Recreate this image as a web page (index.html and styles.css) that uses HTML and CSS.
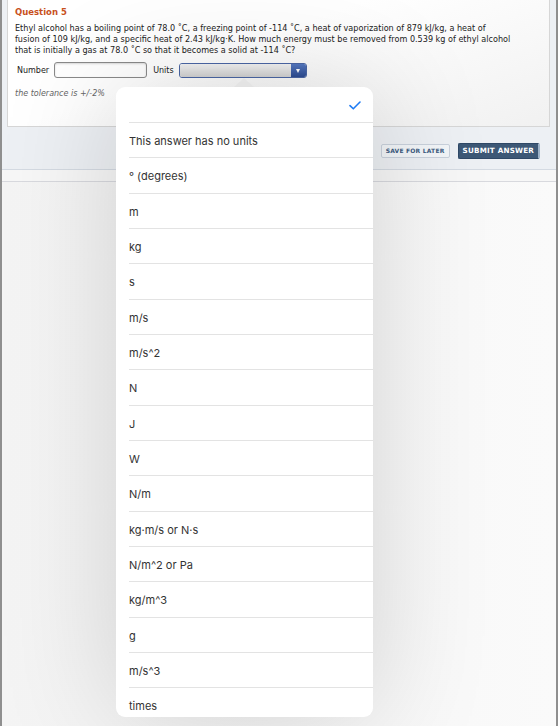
FILE: index.html
```html
<!DOCTYPE html>
<html lang="en">
<head>
    <meta charset="UTF-8">
    <meta name="viewport" content="width=device-width, initial-scale=1.0">
    <title>Question 5</title>
    <link rel="stylesheet" href="styles.css">
</head>
<body>

<div class="frame">
    <div class="panel">
        <div class="question">
            <h3 class="q-title">Question 5</h3>
            <p class="q-text">Ethyl alcohol has a boiling point of 78.0 &#730;C, a freezing point of -114 &#730;C, a heat of vaporization of 879 kJ/kg, a heat of<br>
            fusion of 109 kJ/kg, and a specific heat of 2.43 kJ/kg&middot;K. How much energy must be removed from 0.539 kg of ethyl alcohol<br>
            that is initially a gas at 78.0 &#730;C so that it becomes a solid at -114 &#730;C?</p>

            <div class="answer-row">
                <label for="number">Number</label>
                <input type="text" id="number" class="num-input">
                <label>Units</label>
                <div class="unit-select">
                    <span class="unit-value"></span>
                    <span class="unit-arrow"></span>
                </div>
            </div>

            <div class="tolerance">the tolerance is +/-2%</div>
        </div>

        <div class="actions">
            <button class="btn-save">SAVE FOR LATER</button>
            <button class="btn-submit">SUBMIT ANSWER</button>
        </div>
    </div>
    <div class="strip"></div>
    <div class="rest"></div>
</div>

<!-- units picker popover -->
<div class="popover">
    <div class="pop-arrow"></div>
    <div class="pop-card">
        <div class="pop-head">
            <svg width="12" height="9" viewBox="0 0 12 9"><path d="M1 4.6 L4.3 7.8 L11 1" fill="none" stroke="#1f7cf4" stroke-width="1.6" stroke-linecap="round" stroke-linejoin="round"/></svg>
        </div>
        <div class="opt">This answer has no units</div>
        <div class="opt">&deg; (degrees)</div>
        <div class="opt">m</div>
        <div class="opt">kg</div>
        <div class="opt">s</div>
        <div class="opt">m/s</div>
        <div class="opt">m/s^2</div>
        <div class="opt">N</div>
        <div class="opt">J</div>
        <div class="opt">W</div>
        <div class="opt">N/m</div>
        <div class="opt">kg&middot;m/s or N&middot;s</div>
        <div class="opt">N/m^2 or Pa</div>
        <div class="opt">kg/m^3</div>
        <div class="opt">g</div>
        <div class="opt">m/s^3</div>
        <div class="opt">times</div>
    </div>
</div>

</body>
</html>
```

FILE: styles.css
```css
body {
    margin: 0;
    font-family: 'DejaVu Sans', Verdana, sans-serif;
    background: #fff;
    height: 726px;
    overflow: hidden;
    position: relative;
}
.frame {
    width: 554px;
    height: 726px;
    border-left: 2px solid #8f8f8f;
    border-right: 2px solid #8f8f8f;
    display: flex;
    flex-direction: column;
}
.panel {
    background: #edf0f4;
    padding: 0 6px 0 5px;
    border-bottom: 1px solid #d4dae2;
}
.question {
    height: 127px;
    box-sizing: border-box;
    padding: 6px 7px 0;
    background: linear-gradient(160deg, #ffffff 40%, #f1f1f1);
    border: 1px solid #d6d6d6;
    border-top: none;
}
.q-title {
    margin: 0 0 5px;
    font-size: 8.5px;
    line-height: 12px;
    color: #c8501c;
    font-weight: bold;
}
.q-text {
    margin: 0;
    font-size: 8.1px;
    line-height: 11px;
    color: #222;
    white-space: nowrap;
}
.answer-row {
    display: flex;
    align-items: center;
    margin-top: 6px;
    height: 16px;
    font-size: 8px;
    color: #222;
}
.answer-row label {
    margin-left: 2px;
}
.num-input {
    width: 93px;
    height: 16px;
    box-sizing: border-box;
    margin: 0 4px 0 5px;
    border: 1px solid #8a8a8a;
    border-radius: 3px;
    background: #fff;
    box-shadow: inset 0 1px 2px rgba(0, 0, 0, 0.15);
}
.unit-select {
    display: flex;
    width: 128px;
    height: 15px;
    margin-left: 5px;
    border: 1px solid #4b67a6;
    border-radius: 3px;
    box-sizing: border-box;
    overflow: hidden;
}
.unit-value {
    flex: 1;
    background: linear-gradient(#f4f4f4, #d2d2d2);
}
.unit-arrow {
    width: 15px;
    background: linear-gradient(#5679c2, #2d4c92);
    position: relative;
}
.unit-arrow::after {
    content: "";
    position: absolute;
    left: 5px;
    top: 5px;
    border-left: 2.5px solid transparent;
    border-right: 2.5px solid transparent;
    border-top: 4px solid #fff;
}
.tolerance {
    margin-top: 10px;
    font-size: 8px;
    line-height: 12px;
    font-style: italic;
    color: #666;
}
.actions {
    height: 42px;
    display: flex;
    justify-content: flex-end;
    align-items: center;
    gap: 8px;
    padding-right: 10px;
    padding-top: 5px;
    box-sizing: border-box;
}
.btn-save {
    height: 14px;
    padding: 0 4px;
    border: 1px solid #c9d1dc;
    border-radius: 2px;
    background: #f2f5f8;
    color: #3b5a80;
    font-family: 'DejaVu Sans', sans-serif;
    font-weight: bold;
    font-size: 6px;
    letter-spacing: 0.2px;
}
.btn-submit {
    height: 16px;
    padding: 0 4px;
    border: 1px solid #2f4866;
    border-right: 2px solid #9fb3c8;
    border-radius: 2px;
    background: #3d5876;
    color: #fff;
    font-family: 'DejaVu Sans', sans-serif;
    font-weight: bold;
    font-size: 7.2px;
    letter-spacing: 0.2px;
}
.strip {
    height: 11px;
    background: #f7f7f7;
    border-bottom: 1px solid #d8d9de;
}
.rest {
    flex: 1;
    background: linear-gradient(to right, #f4f4f4, #fafafa);
}

/* popover */
.popover {
    position: absolute;
    left: 116px;
    top: 78px;
    width: 257px;
}
.pop-arrow {
    width: 0;
    height: 0;
    margin-left: 118px;
    border-left: 10px solid transparent;
    border-right: 10px solid transparent;
    border-bottom: 9px solid #f6f6f6;
}
.pop-card {
    height: 630px;
    overflow: hidden;
    background: #fff;
    border-radius: 9px;
    box-shadow: 0 0 120px rgba(0, 0, 0, 0.16);
    font-family: Inter, 'Noto Sans', sans-serif;
    font-size: 11px;
    color: #333;
}
.pop-head {
    height: 35px;
    display: flex;
    justify-content: flex-end;
    align-items: center;
    padding-right: 12px;
    padding-top: 2px;
    box-sizing: border-box;
}
.opt {
    height: 35.33px;
    box-sizing: border-box;
    margin-left: 13px;
    border-top: 1px solid #e3e3e3;
    display: flex;
    align-items: center;
    padding-top: 2px;
}
```
